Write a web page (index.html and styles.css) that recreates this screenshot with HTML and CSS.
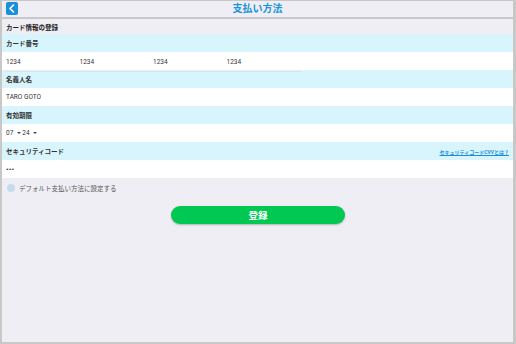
FILE: index.html
```html
<!DOCTYPE html>
<html lang="ja">
<head>
  <meta charset="UTF-8">
  <meta name="viewport" content="width=device-width, initial-scale=1.0">
  <title>支払い方法</title>
  <link rel="stylesheet" href="styles.css">
</head>
<body>
  <main class="frame">
    <header class="topbar">
      <button type="button" class="back">
        <svg width="8" height="9" viewBox="0 0 8 9"><path d="M5.5 1 L2 4.5 L5.5 8" fill="none" stroke="#fff" stroke-width="1.6" stroke-linecap="round" stroke-linejoin="round"/></svg>
      </button>
      <h1>支払い方法</h1>
    </header>
    <section class="form">
      <p class="heading">カード情報の登録</p>
      <p class="label">カード番号</p>
      <div class="field">
        <div class="card_number">
          <span>1234</span>
          <span>1234</span>
          <span>1234</span>
          <span>1234</span>
        </div>
      </div>
      <p class="label">名義人名</p>
      <div class="field">TARO GOTO</div>
      <p class="label">有効期限</p>
      <div class="field expiry">
        <span class="month">07</span><span class="arrow"></span><span class="year">24</span><span class="arrow"></span>
      </div>
      <p class="label label_link">セキュリティコード <a href="#">セキュリティコードCVVとは？</a></p>
      <div class="field secret">•••</div>
      <label class="check"><span class="circle"></span>デフォルト支払い方法に設定する</label>
      <div class="submit_row">
        <button type="button" class="submit">登録</button>
      </div>
    </section>
  </main>
</body>
</html>
```

FILE: styles.css
```css
*{
  padding:0;
  margin:0;
  box-sizing: border-box;
  font-family: Roboto, "Noto Sans CJK JP", sans-serif;
}
body{
  width: 516px;
  height: 344px;
  background-color: #efeef4;
}
.frame{
  height: 344px;
  border: 2px solid #c8c8c8;
  border-top-width: 1px;
  border-right-width: 3px;
  background-color: #efeef4;
}
.topbar{
  height: 18px;
  display: flex;
  align-items: center;
  justify-content: center;
  position: relative;
  border-bottom: 2px solid #c8c8c8;
}
.back{
  position: absolute;
  left: 4px;
  top: 1px;
  width: 12px;
  height: 13px;
  border: none;
  border-radius: 2px;
  background-color: #1a8fdc;
  display: flex;
  align-items: center;
  justify-content: center;
}
.topbar h1{
  font-size: 10px;
  font-weight: 700;
  color: #1a93d9;
  line-height: 1;
}
.heading, .label, .field{
  height: 18px;
  display: flex;
  align-items: center;
  padding-left: 4px;
  font-size: 6.5px;
}
.heading{
  font-weight: 700;
  color: #222;
  height: 15px;
}
.label{
  font-weight: 700;
  color: #333;
  background-color: #d8f4fc;
}
.field{
  background-color: #fff;
  color: #333;
  font-size: 6.5px;
}
.card_number{
  width: 296px;
  height: 100%;
  display: flex;
  align-items: center;
  border-bottom: 1px solid #e2e2e2;
  margin-top: 3px;
}
.card_number span{
  width: 73.5px;
}
.month{
  margin-right: 4px;
}
.year{
  margin-left: 1px;
  margin-right: 3px;
}
.arrow{
  width: 0;
  height: 0;
  border-left: 2px solid transparent;
  border-right: 2px solid transparent;
  border-top: 2px solid #444;
}
.label_link{
  justify-content: space-between;
  padding-right: 4px;
}
.label_link a{
  font-size: 5px;
  color: #1a8fdc;
}
.secret{
  font-size: 8px;
}
.check{
  height: 20px;
  display: flex;
  align-items: center;
  padding-left: 5px;
  font-size: 6.5px;
  color: #555;
}
.circle{
  width: 8px;
  height: 8px;
  border-radius: 50%;
  background-color: #c6dcee;
  margin-right: 4px;
}
.submit_row{
  display: flex;
  justify-content: center;
  padding-top: 8px;
}
.submit{
  width: 174px;
  height: 18px;
  border: none;
  border-radius: 9px;
  background-color: #00c853;
  color: #fff;
  font-size: 9.5px;
  font-weight: 700;
  box-shadow: 0 1px 2px rgba(0,0,0,0.25);
  margin-left: 1px;
}
```
